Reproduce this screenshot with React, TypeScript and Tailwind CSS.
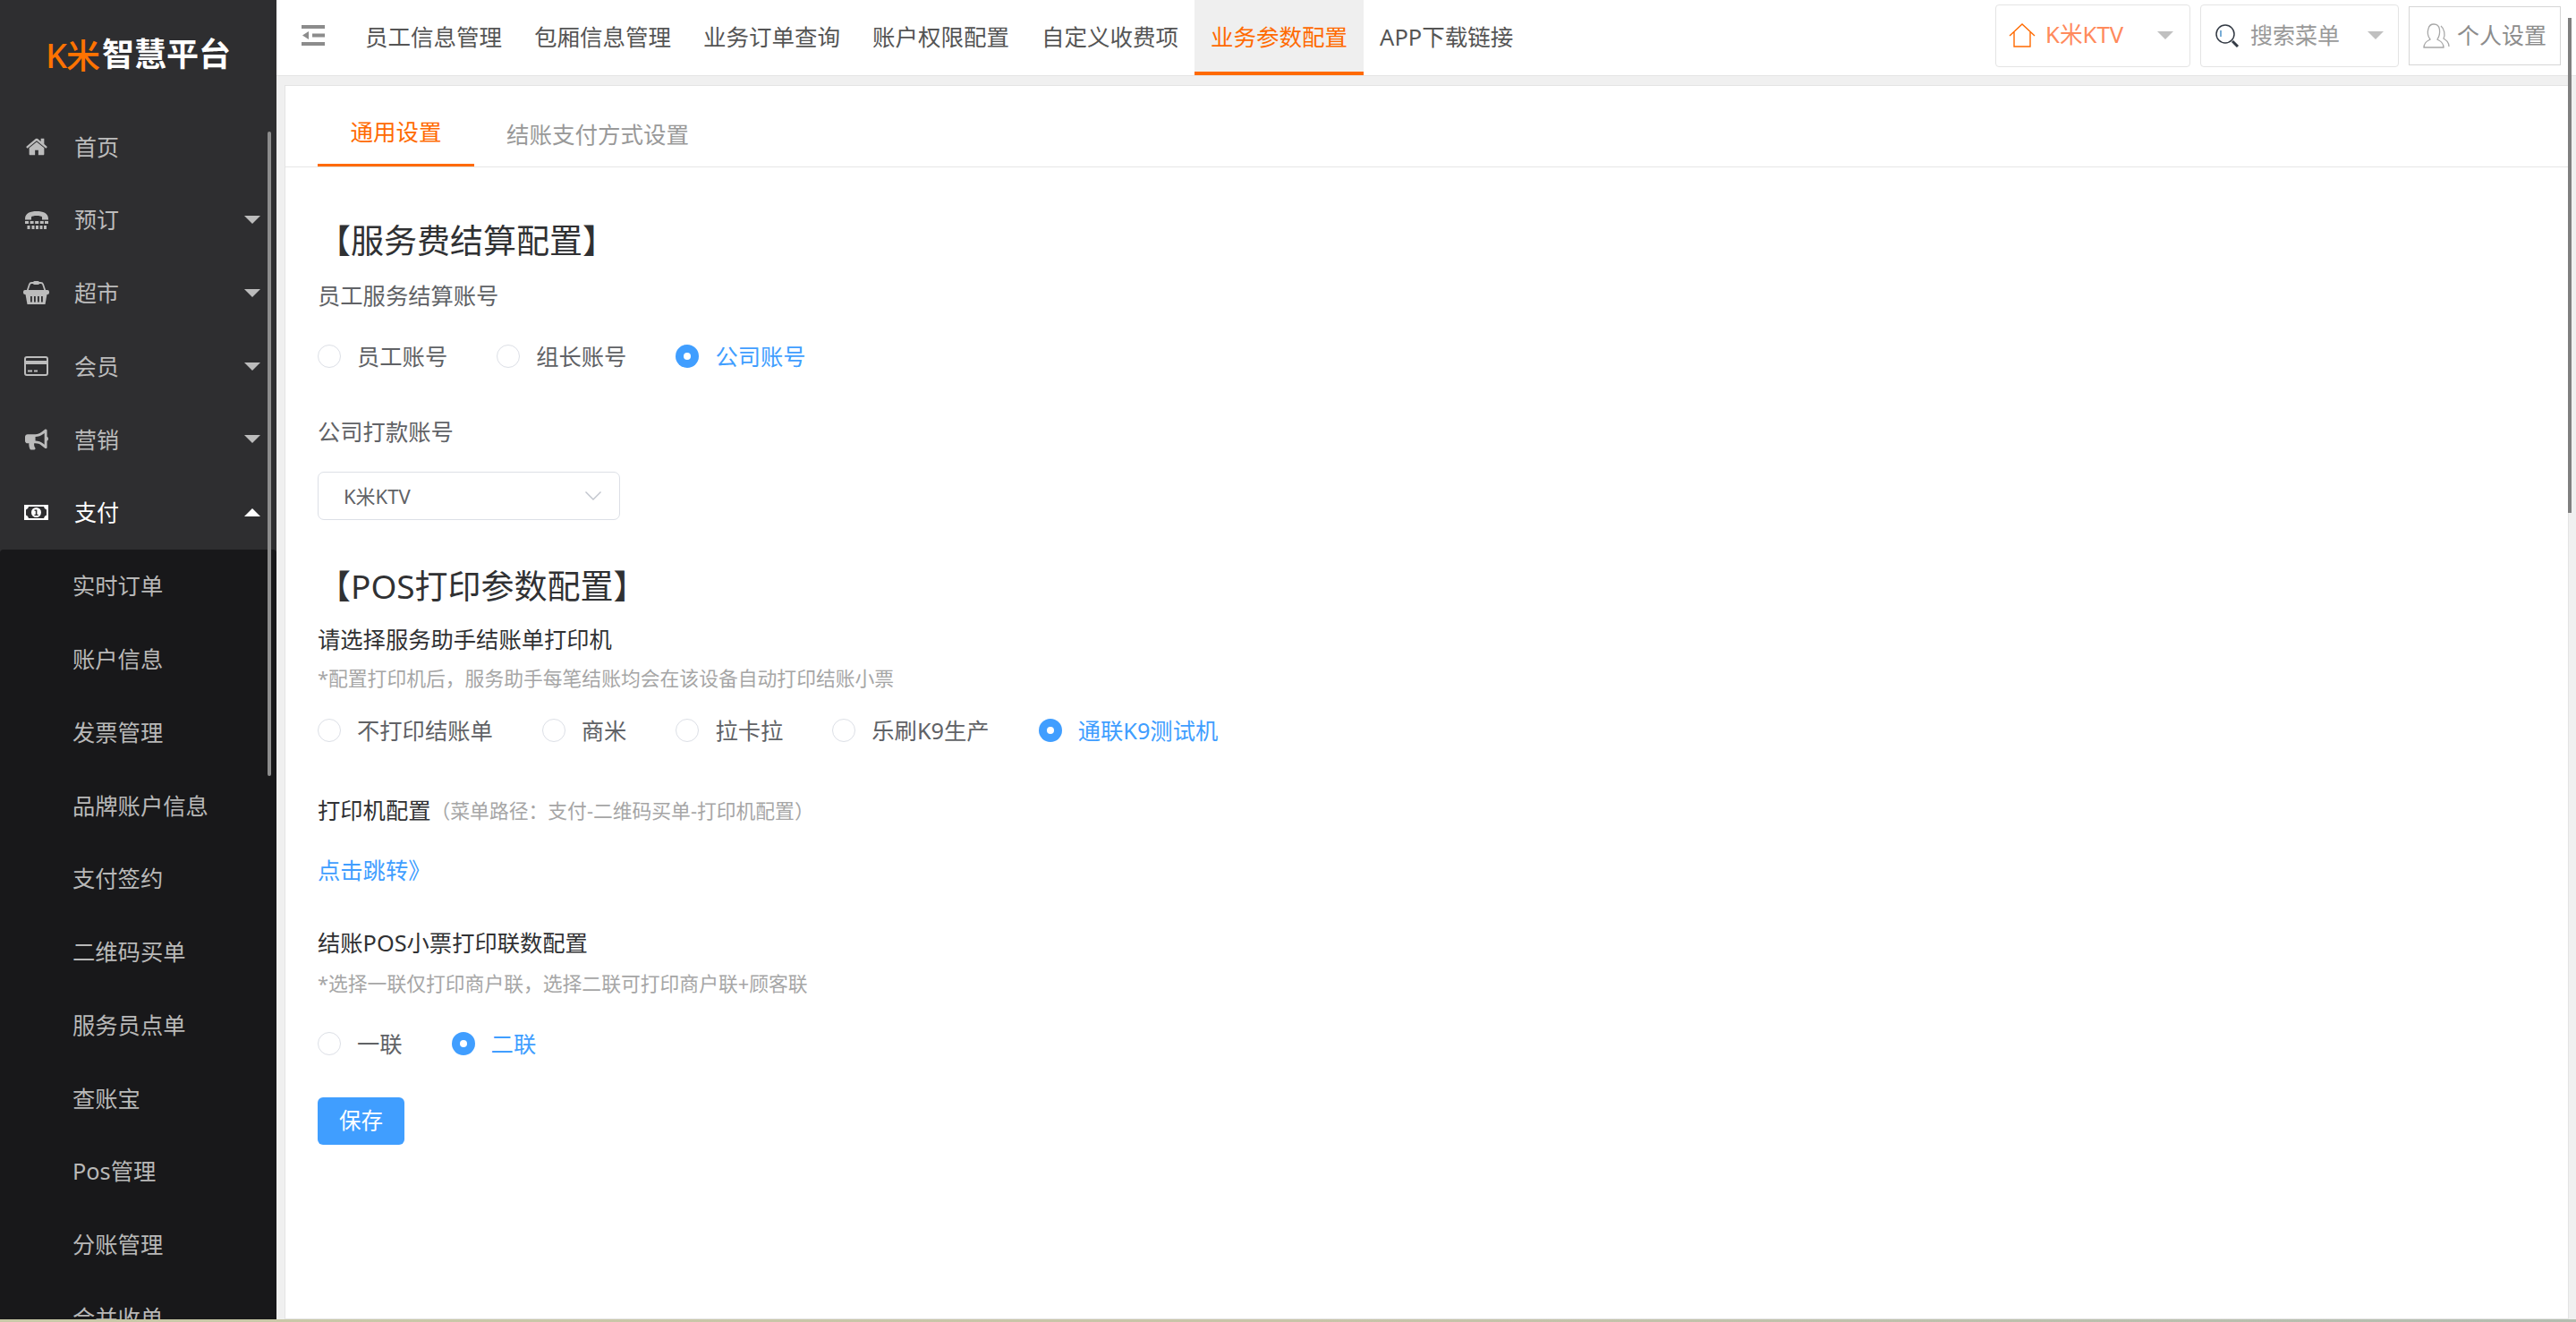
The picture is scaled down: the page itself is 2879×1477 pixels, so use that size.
import React from "react";
import { FaBullhorn } from "react-icons/fa";

const FONT = "font-['Noto_Sans','Noto_Sans_CJK_SC',sans-serif]";

function Caret({ up = false, className = "" }: { up?: boolean; className?: string }) {
  return (
    <svg width="18" height="9" viewBox="0 0 18 9" className={className}>
      <path d={up ? "M0 9 L9 0 L18 9 Z" : "M0 0 L18 0 L9 9 Z"} fill="currentColor" />
    </svg>
  );
}

function HomeIcon() {
  return (
    <svg width="26" height="26" viewBox="0 0 1792 1792" fill="currentColor">
      <path d="M1472 992v480q0 26-19 45t-45 19h-384v-384h-256v384h-384q-26 0-45-19t-19-45v-480q0-1 .5-3t.5-3l575-474 575 474q1 2 1 6zm223-69l-62 74q-8 9-21 11h-3q-13 0-21-7l-692-577-692 577q-12 8-24 7-13-2-21-11l-62-74q-8-10-7-23.5t11-21.5l719-599q32-26 76-26t76 26l244 204v-195q0-14 9-23t23-9h192q14 0 23 9t9 23v408l219 182q10 8 11 21.5t-7 23.5z" />
    </svg>
  );
}

function TtyIcon() {
  return (
    <svg width="26" height="20" viewBox="0 0 26 20" fill="currentColor">
      <path d="M0 8.5 C0 2 6 0 13 0 C20 0 26 2 26 8.5 V9.500 H19 V6.500 C18 4.500 8 4.500 7 6.500 V9.500 H0 Z" />
      {[0, 5.6, 11.2, 16.8, 22].map((x) => (
        <rect key={`a${x}`} x={x} y="11" width="4" height="3" />
      ))}
      {[2.5, 7.500, 12, 16.5, 21].map((x) => (
        <rect key={`b${x}`} x={x} y="16" width="3" height="4" />
      ))}
    </svg>
  );
}

function BasketIcon() {
  return (
    <svg width="29" height="26" viewBox="0 0 29 26" fill="currentColor">
      <path d="M4.500 11 L7 3.500 Q7.500 2 9.500 2 H19.500 Q21.500 2 22 3.500 L24.500 11" fill="none" stroke="currentColor" strokeWidth="1.800" />
      <rect x="11" y="0" width="7" height="4" rx="1.500" />
      <rect x="0" y="10" width="29" height="5" rx="2" />
      <path d="M2.500 15 H26.500 L24.500 26 H4.500 Z" />
      {[8, 12, 16, 20].map((x) => (
        <rect key={x} x={x} y="17" width="1.800" height="6.500" fill="#2e2e30" />
      ))}
    </svg>
  );
}

function CardIcon() {
  return (
    <svg width="27" height="22" viewBox="0 0 27 22" fill="currentColor">
      <rect x="1" y="1" width="25" height="20" rx="2" fill="none" stroke="currentColor" strokeWidth="2" />
      <rect x="1" y="5" width="25" height="4" />
      <rect x="4" y="15.500" width="5" height="2" />
      <rect x="11" y="15.500" width="4" height="2" />
    </svg>
  );
}

function MoneyIcon() {
  return (
    <svg width="27" height="17" viewBox="0 0 27 17">
      <rect width="27" height="17" fill="#ffffff" />
      <path d="M5 2 H22 Q22.500 5 25 5.500 V11.500 Q22.500 12 22 15 H5 Q4.500 12 2 11.500 V5.500 Q4.500 5 5 2 Z" fill="#2e2e30" />
      <circle cx="13.500" cy="8.500" r="5.500" fill="#ffffff" />
      <rect x="12.800" y="5.500" width="1.600" height="6" fill="#2e2e30" />
      <rect x="11.500" y="5.500" width="1.800" height="1.300" fill="#2e2e30" />
      <rect x="11.500" y="10.800" width="4.200" height="1.200" fill="#2e2e30" />
    </svg>
  );
}

const menu = [
  { label: "首页", icon: <HomeIcon />, caret: false },
  { label: "预订", icon: <TtyIcon />, caret: true },
  { label: "超市", icon: <BasketIcon />, caret: true },
  { label: "会员", icon: <CardIcon />, caret: true },
  { label: "营销", icon: <FaBullhorn size={26} />, caret: true },
];
const subs = ["实时订单", "账户信息", "发票管理", "品牌账户信息", "支付签约", "二维码买单", "服务员点单", "查账宝", "Pos管理", "分账管理", "合并收单"];
const nav = ["员工信息管理", "包厢信息管理", "业务订单查询", "账户权限配置", "自定义收费项", "业务参数配置", "APP下载链接"];

function Radio({ label, on = false }: { label: string; on?: boolean }) {
  return (
    <div className={`flex items-center gap-[18px] text-[25.3px] leading-[26px] ${on ? "text-[#409eff]" : "text-[#606266]"}`}>
      {on ? (
        <span className="flex h-[26px] w-[26px] items-center justify-center rounded-full bg-[#409eff]">
          <span className="h-[8px] w-[8px] rounded-full bg-white" />
        </span>
      ) : (
        <span className="h-[26px] w-[26px] rounded-full border border-[#dcdfe6] bg-white" />
      )}
      <span>{label}</span>
    </div>
  );
}

function Sidebar() {
  return (
    <aside className="relative flex w-[309px] shrink-0 flex-col overflow-hidden bg-[#2e2e30]">
      <div className="flex h-[123px] shrink-0 items-start pl-[51px] pt-[36px]">
        <span className="text-[38px] font-medium leading-[50px] tracking-[-1px] text-[#ff7300]">K米</span>
        <span className="ml-[3px] text-[36px] font-bold leading-[50px] text-white">智慧平台</span>
      </div>
      {menu.map((m) => (
        <div key={m.label} className="flex h-[81.75px] shrink-0 items-center text-[#bcbcbc]">
          <span className="flex w-[83px] justify-center pr-[2px]">{m.icon}</span>
          <span className="flex-1 pt-[1px] text-[25px]">{m.label}</span>
          {m.caret && <Caret className="mr-[18px] text-[#bcbcbc]" />}
        </div>
      ))}
      <div className="flex h-[81.75px] shrink-0 items-center text-white">
        <span className="flex w-[83px] justify-center pr-[2px]"><MoneyIcon /></span>
        <span className="flex-1 pt-[1px] text-[25px]">支付</span>
        <Caret up className="mr-[18px] text-white" />
      </div>
      <div className="flex-1 rounded-t-[4px] bg-[#18181a]">
        {subs.map((s) => (
          <div key={s} className="flex h-[81.75px] items-center pl-[81px] pt-[2px] text-[25.3px] text-[#b8b8b8]">{s}</div>
        ))}
      </div>
      <div className="absolute left-[299px] top-[147px] h-[720px] w-[4px] rounded-full bg-[#8c8c8c]" />
    </aside>
  );
}

function Header() {
  return (
    <header className="flex h-[85px] shrink-0 items-center border-b border-[#e4e4e4] bg-white">
      <svg width="26" height="23" viewBox="0 0 26 23" className="ml-[28px] mr-[27px] mb-[5px] text-[#8c8c8c]">
        <rect x="0" y="0" width="26" height="4" fill="currentColor" />
        <rect x="12" y="9.500" width="14" height="4" fill="currentColor" />
        <rect x="0" y="19" width="26" height="4" fill="currentColor" />
        <path d="M8 7 L8 16 L1 11.500 Z" fill="currentColor" />
      </svg>
      <nav className="flex h-full flex-1">
        {nav.map((n) => {
          const active = n === "业务参数配置";
          return (
            <div
              key={n}
              className={`flex h-full items-center border-b-[4px] px-[18px] pb-[2px] pt-[4px] text-[25.5px] ${active ? "border-[#ff6a00] bg-[#efefef] text-[#ff6a00]" : "border-transparent text-[#555555]"}`}
            >
              {n}
            </div>
          );
        })}
      </nav>
      <div className="mb-[5px] flex items-center">
        <div className="flex h-[70px] w-[218px] items-center rounded-[4px] border border-[#e4e4e4] pl-[14px] text-[#ff8a5c]">
          <svg width="30" height="27" viewBox="0 0 30 27" fill="none" stroke="#ff6a00" strokeWidth="1.4">
            <path d="M1 14 L15 1 L29 14 M6 10 V26 H24 V10" />
          </svg>
          <span className="ml-[11px] flex-1 text-[25.7px]">K米KTV</span>
          <Caret className="mr-[18px] text-[#c0c0c0]" />
        </div>
        <div className="ml-[11px] flex h-[70px] w-[222px] items-center rounded-[4px] border border-[#e4e4e4] pl-[16px] text-[#999999]">
          <svg width="27" height="26" viewBox="0 0 27 26" fill="none" stroke="#333a44" strokeWidth="1.5">
            <ellipse cx="11" cy="11" rx="10" ry="10" />
            <path d="M19 19 L25 25" strokeWidth="3" />
            <path d="M6 7 V14" stroke="#4a90c8" />
          </svg>
          <span className="ml-[12px] flex-1 text-[25px]">搜索菜单</span>
          <Caret className="mr-[16px] text-[#c0c0c0]" />
        </div>
        <div className="ml-[11px] mr-[17px] flex h-[66px] w-[170px] items-center border border-[#d6d6d6] pl-[15px] text-[#8c8c8c]">
          <svg width="30" height="28" viewBox="0 0 30 28" fill="none" stroke="#a8a8a8" strokeWidth="1.3">
            <path d="M1 27 C1 21 5 20 8 18 C5 14 5 9 6 6 C7 2 10 1 12 1 C15 1 18 3 18.5 7 C19 11 18 15 16 18 C19 20 23 21 23 27 Z" />
            <path d="M20 3 C24 6 25 13 23 17 C26 19 29 21 29 26" />
          </svg>
          <span className="ml-[8px] text-[25px]">个人设置</span>
        </div>
      </div>
    </header>
  );
}

function Content() {
  return (
    <main className="ml-[9px] mr-[8px] mt-[10px] flex-1 overflow-hidden border border-[#e4e4e4] bg-white">
      <div className="flex h-[91px] border-b border-[#e6e6e6] pl-[36px] text-[25.5px]">
        <div className="flex h-[90px] w-[175px] items-center justify-center border-b-[3px] border-[#ff6a00] pt-[16px] text-[#ff6a00]">通用设置</div>
        <div className="flex h-[90px] items-center px-[36px] pt-[18px] text-[#999999]">结账支付方式设置</div>
      </div>
      <div className="pl-[36px]">
        <h2 className="mt-[60px] h-[44px] text-[37px] leading-[44px] text-[#303133]">【服务费结算配置】</h2>
        <div className="mt-[21px] h-[36px] text-[25.3px] leading-[36px] text-[#606266]">员工服务结算账号</div>
        <div className="mt-[37px] flex gap-[55px]">
          <Radio label="员工账号" />
          <Radio label="组长账号" />
          <Radio label="公司账号" on />
        </div>
        <div className="mt-[53px] h-[36px] text-[25.3px] leading-[36px] text-[#606266]">公司打款账号</div>
        <div className="mt-[27px] flex h-[54px] w-[338px] items-center rounded-[7px] border border-[#dcdfe6] pl-[28px] pr-[20px] text-[22px] text-[#606266]">
          <span className="flex-1">K米KTV</span>
          <svg width="18" height="10" viewBox="0 0 18 10" fill="none" stroke="#c0c4cc" strokeWidth="1.4">
            <path d="M0.500 0.500 L9 9 L17.500 0.500" />
          </svg>
        </div>
        <h2 className="mt-[52px] h-[44px] text-[37px] leading-[44px] text-[#303133]">【POS打印参数配置】</h2>
        <div className="mt-[19px] h-[36px] text-[25.3px] leading-[36px] text-[#303133]">请选择服务助手结账单打印机</div>
        <div className="mt-[8px] h-[36px] text-[21.8px] leading-[36px] text-[#a6a6a6]">*配置打印机后，服务助手每笔结账均会在该设备自动打印结账小票</div>
        <div className="mt-[27px] flex gap-[55px]">
          <Radio label="不打印结账单" />
          <Radio label="商米" />
          <Radio label="拉卡拉" />
          <Radio label="乐刷K9生产" />
          <Radio label="通联K9测试机" on />
        </div>
        <div className="mt-[59px] flex h-[36px] items-center text-[25.3px] text-[#303133]">
          打印机配置<span className="text-[21.8px] text-[#a6a6a6]">（菜单路径：支付-二维码买单-打印机配置）</span>
        </div>
        <div className="mt-[30px] h-[36px] text-[25.3px] leading-[36px] text-[#409eff]">点击跳转》</div>
        <div className="mt-[45px] h-[36px] text-[25.3px] leading-[36px] text-[#303133]">结账POS小票打印联数配置</div>
        <div className="mt-[10px] h-[36px] text-[21.8px] leading-[36px] text-[#a6a6a6]">*选择一联仅打印商户联，选择二联可打印商户联+顾客联</div>
        <div className="mt-[36px] flex gap-[55px]">
          <Radio label="一联" />
          <Radio label="二联" on />
        </div>
        <button className="mt-[47px] flex h-[53px] w-[97px] items-center justify-center rounded-[6px] bg-[#409eff] text-[24.5px] text-white">保存</button>
      </div>
    </main>
  );
}

export default function App() {
  return (
    <div className={`relative flex h-[1477px] w-[2879px] flex-col overflow-hidden bg-[#f0f0f0] ${FONT}`}>
      <div className="flex min-h-0 flex-1">
        <Sidebar />
        <div className="flex min-w-0 flex-1 flex-col">
          <Header />
          <Content />
        </div>
      </div>
      <div className="h-[3px] shrink-0 bg-gradient-to-r from-[#c9c9a8] via-[#c8c4a8] to-[#b3bdb0]" />
      <div className="absolute left-[2870px] top-[20px] h-[553px] w-[4px] bg-[#808080]" />
    </div>
  );
}
